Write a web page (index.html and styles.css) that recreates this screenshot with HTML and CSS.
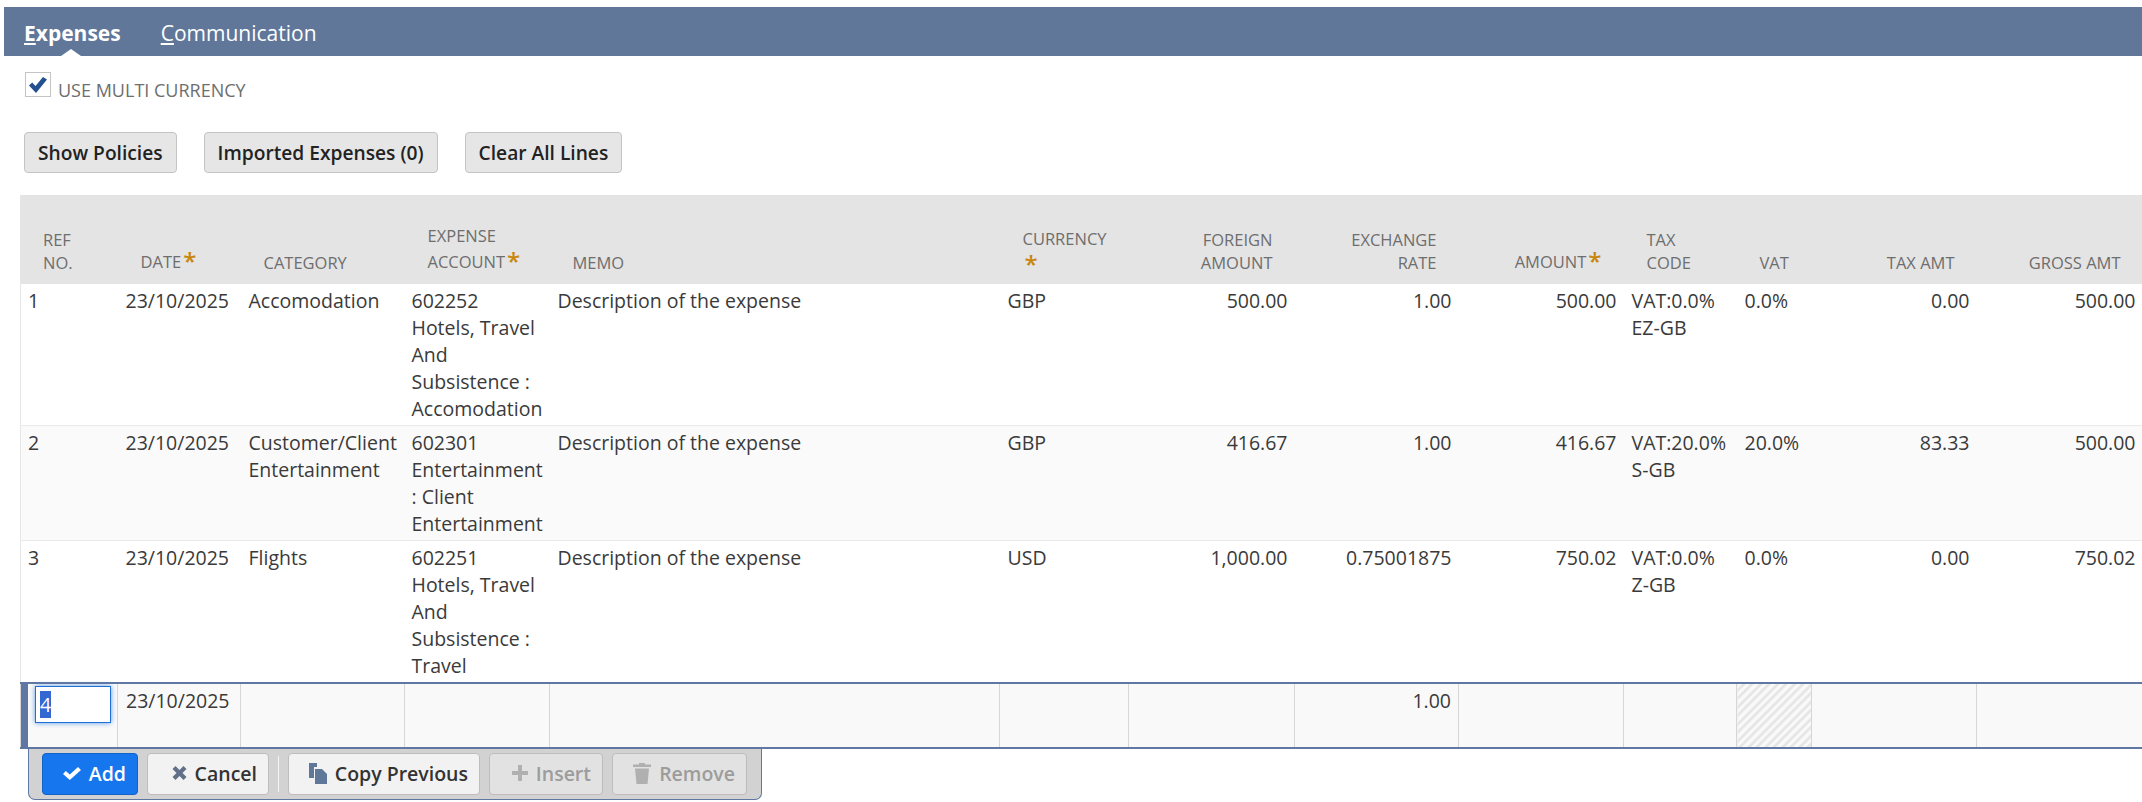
FILE: index.html
```html
<!DOCTYPE HTML>
<html lang="en-US">
<head>
	<meta charset="UTF-8">
	<title>Expenses</title>
	<link rel="stylesheet" href="styles.css">
</head>
<body>
	<div class="tabbar">
		<a class="tab actual"><u>E</u>xpenses</a>
		<a class="tab"><u>C</u>ommunication</a>
	</div>

	<label class="multi">
		<span class="checkbox">
			<svg viewBox="0 0 18 16" class="tick"><path d="M0 8.5 L3.2 5.5 L6.5 9 L14 0 L18 2.5 L7 16 Z"/></svg>
		</span>
		<span class="multi-text">USE MULTI CURRENCY</span>
	</label>

	<div class="actions">
		<button class="btn">Show Policies</button>
		<button class="btn">Imported Expenses (0)</button>
		<button class="btn">Clear All Lines</button>
	</div>

	<table class="lines">
		<colgroup>
			<col class="c-ref"><col class="c-date"><col class="c-cat"><col class="c-acc"><col class="c-memo">
			<col class="c-cur"><col class="c-for"><col class="c-rate"><col class="c-amt"><col class="c-code">
			<col class="c-vat"><col class="c-tax"><col class="c-gross">
		</colgroup>
		<thead>
			<tr>
				<th class="first">REF<br>NO.</th>
				<th>DATE<i class="req">*</i></th>
				<th>CATEGORY</th>
				<th>EXPENSE<br>ACCOUNT<i class="req">*</i></th>
				<th>MEMO</th>
				<th class="top">CURRENCY<br><i class="req">*</i></th>
				<th class="num">FOREIGN<br>AMOUNT</th>
				<th class="num">EXCHANGE<br>RATE</th>
				<th class="num">AMOUNT<i class="req">*</i></th>
				<th>TAX<br>CODE</th>
				<th>VAT</th>
				<th class="num">TAX AMT</th>
				<th class="num">GROSS AMT</th>
			</tr>
		</thead>
		<tbody>
			<tr>
				<td class="first">1</td><td>23/10/2025</td><td>Accomodation</td>
				<td class="acc">602252<br>Hotels, Travel And Subsistence : Accomodation</td>
				<td>Description of the expense</td><td>GBP</td>
				<td class="num">500.00</td><td class="num">1.00</td><td class="num">500.00</td>
				<td>VAT:0.0%<br>EZ-GB</td><td>0.0%</td><td class="num">0.00</td><td class="num">500.00</td>
			</tr>
			<tr class="even">
				<td class="first">2</td><td>23/10/2025</td><td>Customer/Client Entertainment</td>
				<td class="acc">602301<br>Entertainment : Client Entertainment</td>
				<td>Description of the expense</td><td>GBP</td>
				<td class="num">416.67</td><td class="num">1.00</td><td class="num">416.67</td>
				<td>VAT:20.0%<br>S-GB</td><td>20.0%</td><td class="num">83.33</td><td class="num">500.00</td>
			</tr>
			<tr>
				<td class="first">3</td><td>23/10/2025</td><td>Flights</td>
				<td class="acc">602251<br>Hotels, Travel And Subsistence : Travel</td>
				<td>Description of the expense</td><td>USD</td>
				<td class="num">1,000.00</td><td class="num">0.75001875</td><td class="num">750.02</td>
				<td>VAT:0.0%<br>Z-GB</td><td>0.0%</td><td class="num">0.00</td><td class="num">750.02</td>
			</tr>
			<tr class="edit">
				<td class="first"><span class="field"><span class="sel">4</span></span></td>
				<td>23/10/2025</td><td></td><td></td><td></td><td></td><td></td>
				<td class="num">1.00</td><td></td><td></td><td class="hatch"></td><td></td><td></td>
			</tr>
		</tbody>
	</table>

	<div class="toolbar">
		<button class="tbtn add">
			<svg viewBox="0 0 18 13" class="ico i-add"><path d="M0 7 L2.8 4 L6.8 7.6 L15 0 L18 3 L6.8 13 Z"/></svg>Add
		</button>
		<button class="tbtn cancel">
			<svg viewBox="0 0 15 14" class="ico i-cancel"><path d="M0.5 3 L3.5 0 L7.5 4 L11.5 0 L14.5 3 L10.5 7 L14.5 11 L11.5 14 L7.5 10 L3.5 14 L0.5 11 L4.5 7 Z"/></svg>Cancel
		</button>
		<span class="sep"></span>
		<button class="tbtn copy">
			<svg viewBox="0 0 18 21" class="ico i-copy"><path d="M0 0 H8 V4 H5 V15 H0 Z"/><path d="M6 6 H13 L18 11 V21 H6 Z"/></svg>Copy Previous
		</button>
		<button class="tbtn off insert">
			<svg viewBox="0 0 16 16" class="ico i-insert"><path d="M6 0 H10 V6 H16 V10 H10 V16 H6 V10 H0 V6 H6 Z"/></svg>Insert
		</button>
		<button class="tbtn off remove">
			<svg viewBox="0 0 18 21" class="ico i-remove"><path d="M6 0 H12 V1.5 H18 V4 H0 V1.5 H6 Z"/><path d="M2 5.5 H16 L14.5 21 H3.5 Z"/></svg>Remove
		</button>
	</div>
</body>
</html>
```

FILE: styles.css
```css
/* pagina */
html, body {
margin: 0;
padding: 0;
background: #fff;
}
body {
font-family: "Open Sans", "Liberation Sans", sans-serif;
font-size: 19.5px;
line-height: 27px;
color: #3a3a3a;
overflow: hidden;
}

/* barra de pestañas */
.tabbar {
display: flex;
gap: 40px;
margin: 7px 0 0 4px;
padding-left: 20px;
height: 49px;
background: #607799;
}
.tab {
position: relative;
font-size: 21px;
line-height: 52px;
color: #fff;
}
.tab.actual {
font-weight: 700;
}
.tab.actual::after {
content: "";
position: absolute;
left: 37px;
bottom: 0;
border-left: 10px solid transparent;
border-right: 10px solid transparent;
border-bottom: 7px solid #fff;
}

/* checkbox */
.multi {
display: flex;
align-items: flex-start;
gap: 7px;
margin: 16px 0 0 25px;
height: 25px;
}
.checkbox {
box-sizing: border-box;
display: block;
width: 26px;
height: 25px;
border: 1px solid #c4c4c4;
background: #fff;
padding: 4px 3px;
}
.tick {
display: block;
width: 18px;
height: 16px;
fill: #25508f;
}
.multi-text {
font-size: 18px;
line-height: 24px;
margin-top: 6px;
color: #6e6e6e;
}

/* botones */
.actions {
display: flex;
gap: 27px;
margin: 35px 0 0 24px;
}
.btn {
height: 41px;
padding: 0 13px;
border: 1px solid #c4c4c4;
border-radius: 4px;
background: #e6e6e6;
font-family: inherit;
font-size: 19.2px;
font-weight: 600;
color: #222;
}

/* tabla */
.lines {
table-layout: fixed;
border-collapse: collapse;
width: 2122px;
margin: 22px 0 0 20px;
border-left: 1px solid #e6e6e6;
}
.c-ref { width: 97px; }
.c-date { width: 123px; }
.c-cat { width: 164px; }
.c-acc { width: 145px; }
.c-memo { width: 450px; }
.c-cur { width: 129px; }
.c-for { width: 166px; }
.c-rate { width: 164px; }
.c-amt { width: 165px; }
.c-code { width: 113px; }
.c-vat { width: 75px; }
.c-tax { width: 165px; }
.c-gross { width: 166px; }

.lines th {
height: 79px;
padding: 0 22px 10px 23px;
background: #e4e4e4;
font-size: 16.5px;
font-weight: 400;
line-height: 23px;
color: #6e6e6e;
text-align: left;
vertical-align: bottom;
white-space: nowrap;
}
.lines th.first {
padding-left: 22px;
}
.lines th.num {
text-align: right;
}
.lines th.top {
padding-bottom: 7px;
}
.req {
font-style: normal;
font-size: 24px;
font-weight: 600;
line-height: 27px;
color: #c8860d;
vertical-align: -2px;
margin-left: 2px;
}
.lines td {
padding: 3px 3px 3px 8px;
vertical-align: top;
border-bottom: 1px solid #eaeaea;
}
.lines td.first {
padding-left: 7px;
}
.lines td.acc {
padding-left: 7px;
}
.lines td.num {
padding-right: 7px;
text-align: right;
}
.even td {
background: #fafafa;
}

/* fila en edicion */
.lines .edit td {
height: 57px;
background: #f9f9f9;
border-top: 2px solid #5f77a3;
border-bottom: 2px solid #5f77a3;
border-left: 1px solid #d6d6d6;
border-right: 1px solid #d6d6d6;
}
.lines .edit td.first {
padding: 2px 0 0 14px;
box-shadow: inset 7px 0 0 #5f77a3;
}
.lines .edit td.hatch {
background: repeating-linear-gradient(135deg, #f9f9f9 0 3px, #e6e6e6 3px 6px);
}
.field {
box-sizing: border-box;
display: block;
width: 76px;
height: 37px;
padding: 4px;
border: 1px solid #1f6fd6;
background: #fff;
box-shadow: 0 0 5px #5a9be8;
}
.sel {
display: inline-block;
background: #3367d1;
color: #fff;
}

/* barra de acciones de la linea */
.toolbar {
box-sizing: border-box;
display: flex;
align-items: flex-start;
gap: 9px;
width: 734px;
height: 51px;
margin-left: 28px;
padding: 4px 0 0 13px;
background: #d2d2d2;
border: 1px solid #5f77a3;
border-top: 0;
border-radius: 0 0 7px 7px;
}
.tbtn {
display: flex;
align-items: center;
justify-content: flex-end;
gap: 8px;
box-sizing: border-box;
height: 42px;
padding: 0 11px 2px 0;
border: 1px solid #bdbdbd;
border-radius: 4px;
background: #f2f2f2;
font-family: inherit;
font-size: 19.5px;
font-weight: 600;
color: #333;
}
.ico {
fill: #5f7088;
}
.i-add { width: 18px; height: 13px; }
.i-cancel { width: 15px; height: 14px; }
.i-copy { width: 18px; height: 21px; fill: #5f7799; }
.i-insert { width: 16px; height: 16px; }
.i-remove { width: 18px; height: 21px; }
.add {
width: 96px;
background: #1676ee;
border-color: #1262c8;
color: #fff;
}
.add .ico {
fill: #fff;
}
.cancel {
width: 122px;
}
.copy {
width: 192px;
}
.insert {
width: 114px;
}
.remove {
width: 135px;
}
.off {
background: #e2e2e2;
color: #9c9c9c;
}
.off .ico {
fill: #b0b0b0;
}
.sep {
width: 1px;
height: 36px;
margin-top: 3px;
background: #f4f4f4;
}
```
